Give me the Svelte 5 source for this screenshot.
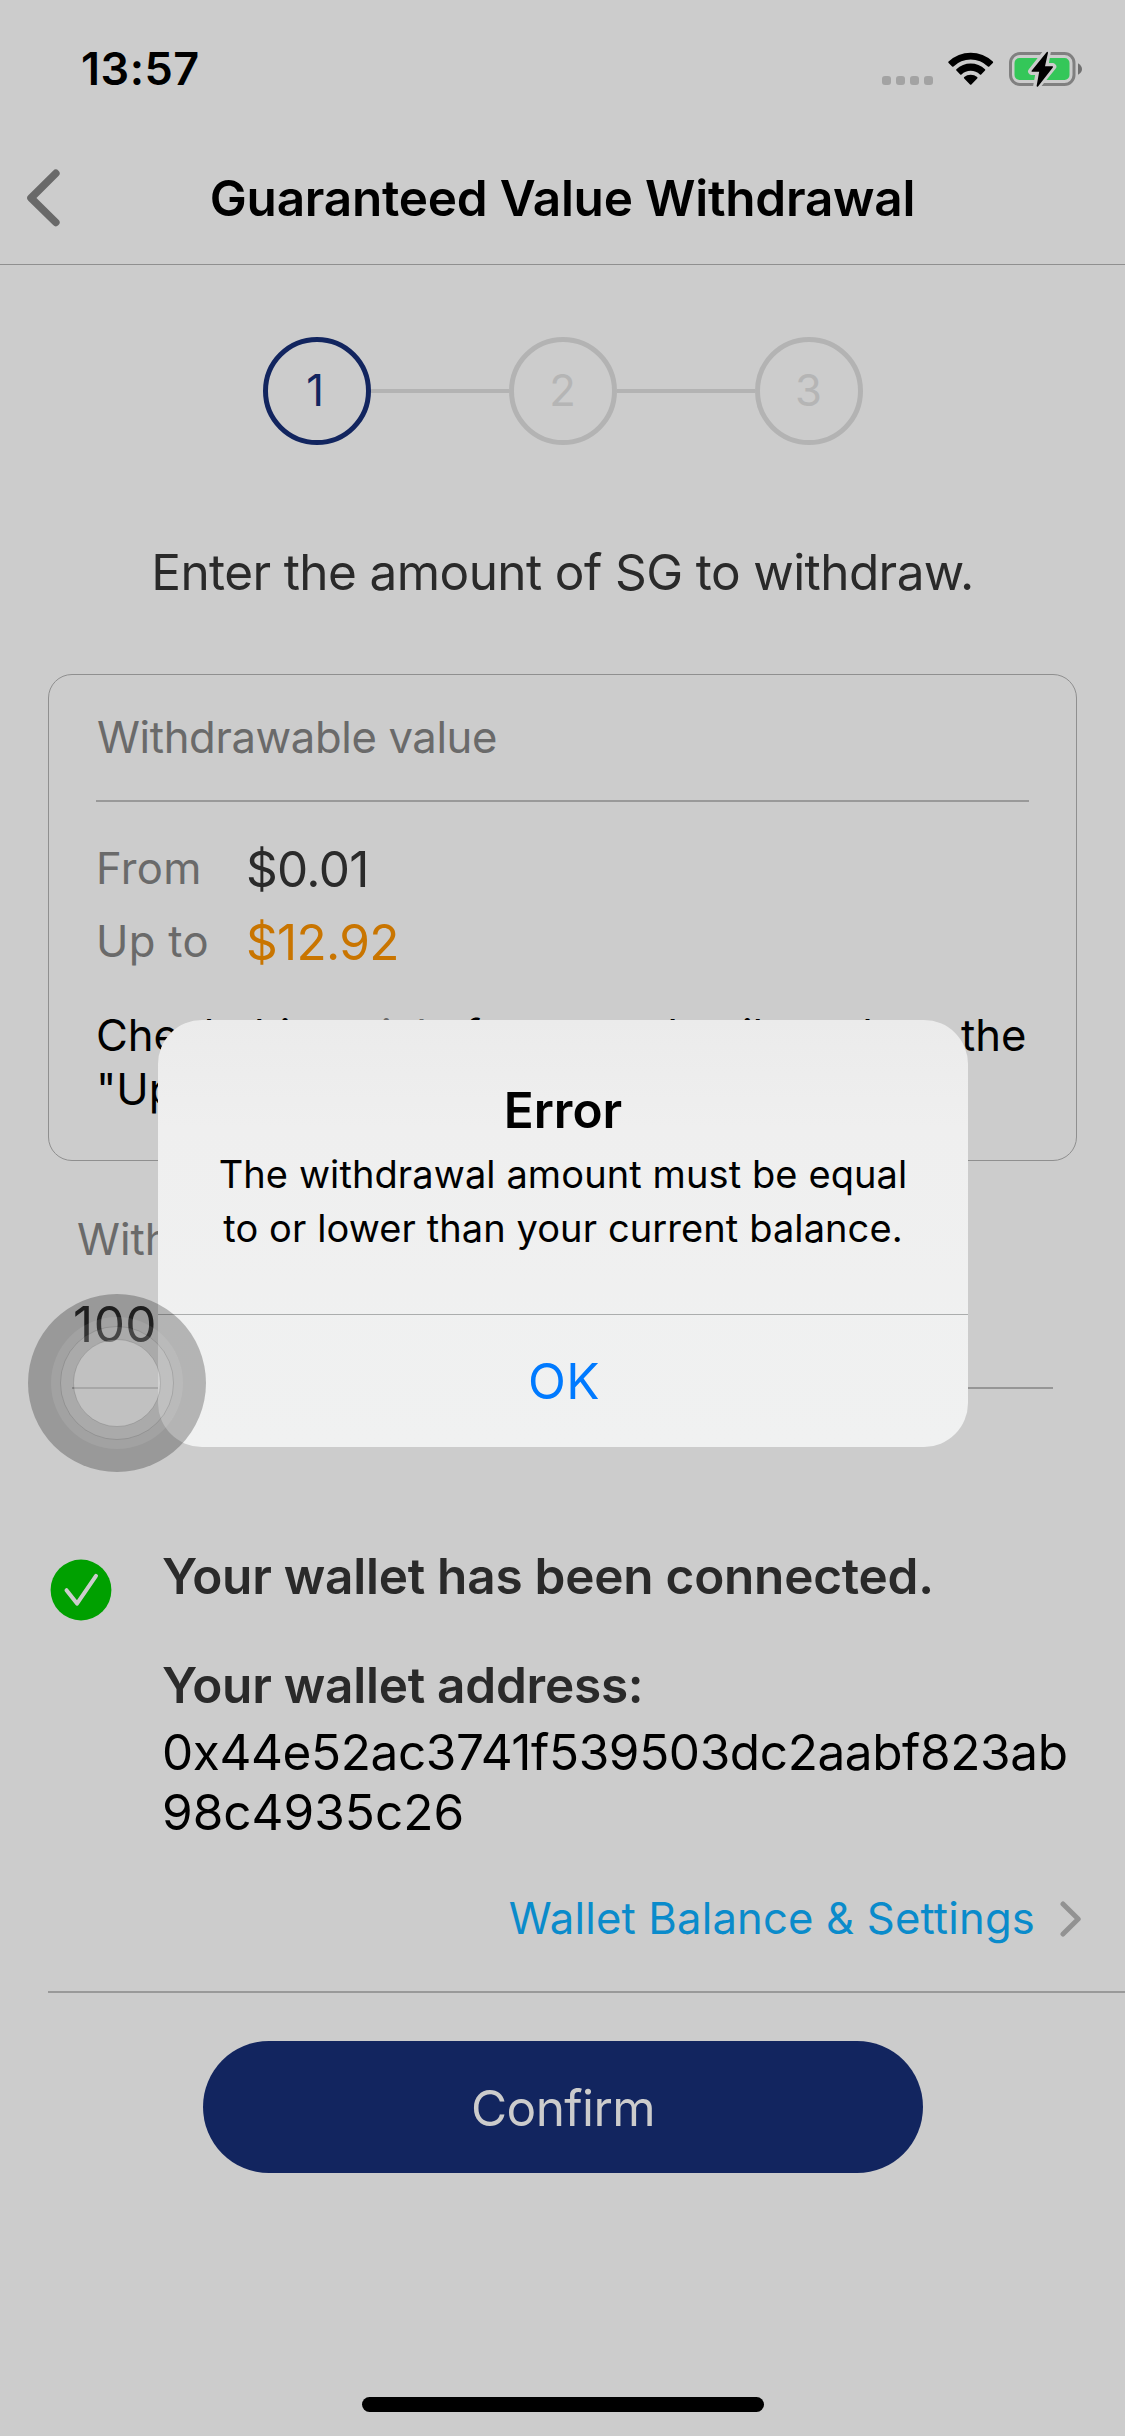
<script>
  const steps = [1, 2, 3];
  const current = 1;
  const limits = [
    { label: 'From', value: '$0.01', kind: 'min' },
    { label: 'Up to', value: '$12.92', kind: 'max' },
  ];
</script>

<div class="screen">
  <div class="status">
    <span class="time">13:57</span>
    <div class="indicators">
      <svg class="signal" width="52" height="34" viewBox="0 0 52 34">
        <rect x="0" y="24" width="9" height="9" rx="3" />
        <rect x="14" y="24" width="9" height="9" rx="3" />
        <rect x="28" y="24" width="9" height="9" rx="3" />
        <rect x="42" y="24" width="9" height="9" rx="3" />
      </svg>
      <svg class="wifi" width="46" height="34" viewBox="0 0 46 34">
        <path d="M0.6 9.6 A32 32 0 0 1 44.8 9.6 Q45.5 10.3 44.8 11 L41.3 14.4 Q40.6 15 39.9 14.4 A24.6 24.6 0 0 0 5.5 14.4 Q4.8 15 4.1 14.4 L0.6 11 Q-0.1 10.3 0.6 9.6Z" />
        <path d="M8.4 17.2 A21 21 0 0 1 37 17.2 Q37.7 17.9 37 18.6 L33.2 22.4 Q32.6 23 31.9 22.4 A13.6 13.6 0 0 0 13.5 22.4 Q12.8 23 12.2 22.4 L8.4 18.6 Q7.7 17.9 8.4 17.2Z" />
        <path d="M16.2 25.1 A9.8 9.8 0 0 1 29.2 25.1 Q29.9 25.8 29.2 26.5 L23.4 32.4 Q22.7 33 22 32.4 L16.2 26.5 Q15.5 25.8 16.2 25.1Z" />
      </svg>
      <svg class="battery" width="74" height="38" viewBox="0 0 74 38">
        <rect class="shell" x="1.5" y="3.5" width="63.5" height="31" rx="9.5" />
        <path class="nub" d="M69 13.2 Q73 15.6 73 19 Q73 22.4 69 24.8Z" />
        <rect class="charge" x="5.5" y="8" width="55" height="22" rx="5" />
        <path class="halo" d="M38.4 1.2 L22.6 21.4 L30.3 21.4 L27.6 36.6 L43.8 16.6 L35.8 16.6Z" />
        <path class="bolt" d="M37.6 2.2 L22.6 20.8 Q22 21.8 23.2 21.8 L30.2 21.8 L27.6 36 Q28 37.4 29.2 36.2 L43.8 17.4 Q44.6 16.2 43.2 16.2 L36 16.2 L39 2.8 Q38.8 1 37.6 2.2Z" />
      </svg>
    </div>
  </div>

  <header class="nav">
    <svg class="back" width="34" height="58" viewBox="0 0 34 58">
      <path d="M29.8 4.4 L5 29 L29.8 53.4" />
    </svg>
    <h1>Guaranteed Value Withdrawal</h1>
  </header>

  <div class="steps">
    {#each steps as step}
      {#if step > 1}<span class="link-bar"></span>{/if}
      <span class="step" class:active={step === current}>{step}</span>
    {/each}
  </div>

  <p class="prompt">Enter the amount of SG to withdraw.</p>

  <section class="card">
    <h2>Withdrawable value</h2>
    <div class="limits">
      {#each limits as limit}
        <div class="limit">
          <span class="label">{limit.label}</span>
          <span class="value {limit.kind}">{limit.value}</span>
        </div>
      {/each}
    </div>
    <p class="note">Check this <span class="article">article</span> for more details on how the<br />"Up to" value is set.</p>
  </section>

  <div class="field">
    <span class="field-label">Withdrawal amount</span>
    <span class="field-value">100</span>
  </div>

  <section class="wallet">
    <svg class="check" width="62" height="62" viewBox="0 0 62 62">
      <circle cx="31" cy="31" r="30.4" />
      <path d="M16.5 31.2 L27 44.6 L46 16.8" />
    </svg>
    <div class="wallet-text">
      <h3>Your wallet has been connected.</h3>
      <h3 class="address-title">Your wallet address:</h3>
      <p class="address"><span>0x44e52ac3741f539503dc2aabf823ab</span><br />98c4935c26</p>
    </div>
  </section>

  <div class="settings">
    <span>Wallet Balance &amp; Settings</span>
    <svg width="22" height="36" viewBox="0 0 22 36">
      <path d="M3 3 L18.2 18 L3 33" />
    </svg>
  </div>

  <button class="confirm">Confirm</button>

  <div class="home"></div>

  <div class="alert">
    <div class="alert-body">
      <strong>Error</strong>
      <p>The withdrawal amount must be equal<br />to or lower than your current balance.</p>
    </div>
    <div class="alert-action">OK</div>
  </div>

  <svg class="touch" width="180" height="180" viewBox="0 0 180 180">
    <circle class="outer" cx="90" cy="90" r="89" />
    <circle class="ring" cx="90" cy="90" r="66" />
    <circle class="ring edge" cx="90" cy="90" r="56.5" />
    <circle class="core" cx="90" cy="90" r="43.5" />
  </svg>
</div>

<style>
  :global(body) {
    background: #ccc;
  }
  .screen {
    position: relative;
    box-sizing: border-box;
    display: flex;
    flex-direction: column;
    width: 1125px;
    height: 2436px;
    overflow: hidden;
    background: #ccc;
    color: #000;
    font-family: Inter, 'Liberation Sans', sans-serif;
    font-size: 43.6px;
    line-height: 54px;
    white-space: nowrap;
  }
  h1, h2, h3, p {
    margin: 0;
    font-size: inherit;
    font-weight: 400;
  }
  svg {
    display: block;
    flex: none;
  }

  .status {
    display: flex;
    align-items: center;
    justify-content: space-between;
    height: 138px;
    padding: 0 42px 0 81px;
  }
  .time {
    font-size: 45px;
    font-weight: 600;
    letter-spacing: 0.5px;
  }
  .indicators {
    display: flex;
    align-items: center;
  }
  .signal { fill: #a3a3a3; }
  .wifi { margin-left: 14px; }
  .battery { margin-left: 15px; }
  .shell { fill: none; stroke: #808080; stroke-width: 3; }
  .nub { fill: #707070; }
  .charge { fill: #34c759; }
  .halo { fill: #ccc; stroke: #ccc; stroke-width: 7; stroke-linejoin: round; }

  .nav {
    display: grid;
    grid-template-columns: 80px 1fr 80px;
    align-items: center;
    box-sizing: border-box;
    height: 127px;
    padding-bottom: 6px;
    border-bottom: 1px solid #8f8f8f;
  }
  .back { margin-left: 26px; }
  .back path {
    fill: none;
    stroke: #696969;
    stroke-width: 7.6;
    stroke-linecap: round;
    stroke-linejoin: round;
  }
  h1 {
    text-align: center;
    font-size: 49.5px;
    font-weight: 600;
    letter-spacing: -0.24px;
  }

  .steps {
    display: flex;
    align-items: center;
    justify-content: center;
    margin-top: 72px;
  }
  .step {
    display: flex;
    align-items: center;
    justify-content: center;
    box-sizing: border-box;
    width: 108px;
    height: 108px;
    border: 5px solid #b3b3b3;
    border-radius: 50%;
    color: #b5b5b5;
  }
  .step.active {
    padding-right: 3px;
    border-color: #12255f;
    color: #12255f;
  }
  .link-bar {
    width: 138px;
    height: 4px;
    background: #b3b3b3;
  }

  .prompt {
    margin-top: 97px;
    text-align: center;
    font-size: 49.5px;
    line-height: 60px;
    letter-spacing: -0.6px;
    color: #2a2a2a;
  }

  .card {
    box-sizing: border-box;
    height: 487px;
    margin: 72px 48px 0;
    padding: 0 47px;
    border: 1px solid #8f8f8f;
    border-radius: 24px;
  }
  h2 {
    height: 125px;
    padding-left: 1px;
    line-height: 126px;
    border-bottom: 2px solid #999;
    color: #6a6a6a;
    letter-spacing: -0.37px;
  }
  .limits { padding-top: 30px; }
  .limit {
    display: flex;
    align-items: center;
    height: 73px;
  }
  .label {
    width: 150px;
    letter-spacing: 0.3px;
    color: #6a6a6a;
  }
  .value {
    font-size: 49.5px;
    letter-spacing: -0.7px;
  }
  .min { color: #2a2a2a; }
  .max { color: #c97500; }
  .note {
    height: 108px;
    margin-top: 31px;
    letter-spacing: -0.06px;
  }
  .article { color: #6a6a6a; }

  .field {
    display: flex;
    flex-direction: column;
    margin: 52px 72px 0;
    padding-bottom: 33px;
    border-bottom: 2px solid #969696;
  }
  .field-label {
    padding-left: 5px;
    color: #6a6a6a;
  }
  .field-value {
    margin-top: 27px;
    padding-left: 1px;
    font-size: 49.5px;
    line-height: 60px;
    letter-spacing: 0.5px;
    color: #2a2a2a;
  }

  .wallet {
    display: flex;
    align-items: flex-start;
    gap: 51px;
    margin: 157px 0 0 50px;
  }
  .check { margin-top: 13px; margin-right: -1px; }
  .check circle { fill: #00a000; }
  .check path {
    fill: none;
    stroke: #ccc;
    stroke-width: 4;
    stroke-linecap: round;
    stroke-linejoin: round;
  }
  .wallet-text {
    font-size: 49.5px;
    line-height: 60px;
  }
  h3 {
    font-weight: 600;
    letter-spacing: -0.24px;
    color: #2a2a2a;
  }
  .address-title { margin-top: 49px; }
  .address { margin-top: 7px; }
  .address span { letter-spacing: -0.4px; }

  .settings {
    display: flex;
    align-items: center;
    justify-content: flex-end;
    gap: 25px;
    margin: 50px 0 0 48px;
    padding: 0 43px 45px 0;
    border-bottom: 2px solid #999;
    letter-spacing: 0.17px;
    color: #0a8bcb;
  }
  .settings path {
    fill: none;
    stroke: #929292;
    stroke-width: 5;
    stroke-linecap: round;
    stroke-linejoin: round;
  }

  .confirm {
    align-self: center;
    width: 720px;
    height: 132px;
    margin-top: 48px;
    padding: 1px 0 0 1px;
    border: 0;
    border-radius: 66px;
    background: #12255f;
    color: #ccc;
    font: 400 49.5px Inter, 'Liberation Sans', sans-serif;
    letter-spacing: -0.6px;
  }

  .home {
    align-self: center;
    width: 402px;
    height: 15px;
    margin: auto 0 24px;
    border-radius: 8px;
    background: #000;
  }

  .alert {
    position: absolute;
    top: 1020px;
    left: 158px;
    width: 810px;
    border-radius: 44px;
    background: linear-gradient(#ebebeb, #efefef 25%, #f0f1f1);
    text-align: center;
  }
  .alert-body {
    padding: 60px 0 59px;
    border-bottom: 1px solid #abadad;
  }
  .alert strong {
    display: block;
    font-size: 49.5px;
    font-weight: 600;
    line-height: 60px;
  }
  .alert p {
    margin-top: 8px;
    font-size: 38px;
    line-height: 53.5px;
    letter-spacing: 0.1px;
  }
  .alert-action {
    padding-left: 2px;
    font-size: 49.5px;
    line-height: 132px;
    letter-spacing: 0.5px;
    color: #007aff;
  }

  /* Floating assistive button above everything else */
  .touch {
    position: absolute;
    top: 1293px;
    left: 27px;
  }
  .outer { fill: rgba(0, 0, 0, 0.25); }
  .ring { fill: rgba(255, 255, 255, 0.09); }
  .edge { stroke: rgba(0, 0, 0, 0.12); stroke-width: 1; }
  .core { fill: rgba(255, 255, 255, 0.27); stroke: rgba(0, 0, 0, 0.12); stroke-width: 1; }
</style>
